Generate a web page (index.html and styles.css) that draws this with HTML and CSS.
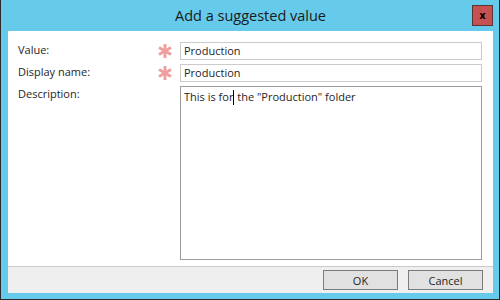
FILE: index.html
```html
<!DOCTYPE html>
<html>
<head>
<meta charset="utf-8">
<link rel="stylesheet" href="styles.css">
</head>
<body>
<div class="window">
  <div class="titlebar">
    <span class="title">Add a suggested value</span>
    <button class="close">x</button>
  </div>
  <div class="client">
    <div class="form">
      <label class="label">Value:</label>
      <span class="req"><svg viewBox="0 0 14 14" width="14" height="14"><g stroke="#ef9f9f" stroke-width="3"><line x1="7" y1="0" x2="7" y2="14"/><line x1="1" y1="3.5" x2="13" y2="10.5"/><line x1="1" y1="10.5" x2="13" y2="3.5"/></g></svg></span>
      <div class="input">Production</div>

      <label class="label">Display name:</label>
      <span class="req"><svg viewBox="0 0 14 14" width="14" height="14"><g stroke="#ef9f9f" stroke-width="3"><line x1="7" y1="0" x2="7" y2="14"/><line x1="1" y1="3.5" x2="13" y2="10.5"/><line x1="1" y1="10.5" x2="13" y2="3.5"/></g></svg></span>
      <div class="input">Production</div>

      <label class="label">Description:</label>
      <span class="req"></span>
      <div class="textarea">This is for<span class="caret"></span> the "Production" folder</div>
    </div>
    <div class="footer">
      <button class="btn">OK</button>
      <button class="btn">Cancel</button>
    </div>
  </div>
</div>
</body>
</html>
```

FILE: styles.css
```css
html, body {
  margin: 0;
  padding: 0;
}
body {
  font-family: "Open Sans", "Noto Sans", sans-serif;
  font-size: 11px;
  color: #1e1e1e;
}
.window {
  width: 500px;
  height: 300px;
  box-sizing: border-box;
  background: #66cbea;
  border: 1px solid #2b2b2b;
  border-top: none;
  padding: 0 6px 6px 7px;
  display: flex;
  flex-direction: column;
}
.titlebar {
  position: relative;
  height: 31px;
  flex: none;
  display: flex;
  align-items: center;
  justify-content: center;
}
.title {
  font-size: 14.5px;
  color: #1a1a1a;
  margin-top: -1px;
}
.close {
  position: absolute;
  right: 0;
  top: 5px;
  width: 21px;
  height: 21px;
  box-sizing: border-box;
  margin: 0;
  padding: 0;
  background: #c75050;
  border: 1px solid #5b3434;
  font-family: "DejaVu Sans", sans-serif;
  font-weight: bold;
  font-size: 10px;
  line-height: 17px;
  color: #000;
}
.client {
  flex: 1;
  background: #fff;
  display: flex;
  flex-direction: column;
}
.form {
  flex: 1;
  display: grid;
  grid-template-columns: 140px 22px 1fr;
  grid-template-rows: 18px 18px 1fr;
  row-gap: 4px;
  padding: 11px 11px 6px 10px;
}
.label {
  line-height: 16px;
  align-self: start;
}
.req {
  display: flex;
  align-items: center;
}
.req svg {
  display: block;
}
.input {
  box-sizing: border-box;
  height: 18px;
  border: 1px solid #cbcbcb;
  padding: 0 3px;
  line-height: 15px;
}
.textarea {
  border: 1px solid #9c9c9c;
  padding: 1px 3px;
  line-height: 17px;
}
.caret {
  display: inline-block;
  width: 1px;
  height: 15px;
  background: #000;
  vertical-align: -4px;
}
.footer {
  flex: none;
  background: #efefef;
  border-top: 1px solid #c9c9c9;
  display: flex;
  justify-content: flex-end;
  gap: 10px;
  padding: 3px 10px 3px;
}
.btn {
  width: 75px;
  height: 20px;
  margin: 0;
  padding: 0;
  box-sizing: border-box;
  background: #e1e1e1;
  border: 1px solid #7a7a7a;
  font-family: "Open Sans", "Noto Sans", sans-serif;
  font-size: 11px;
  color: #1e1e1e;
}
```
